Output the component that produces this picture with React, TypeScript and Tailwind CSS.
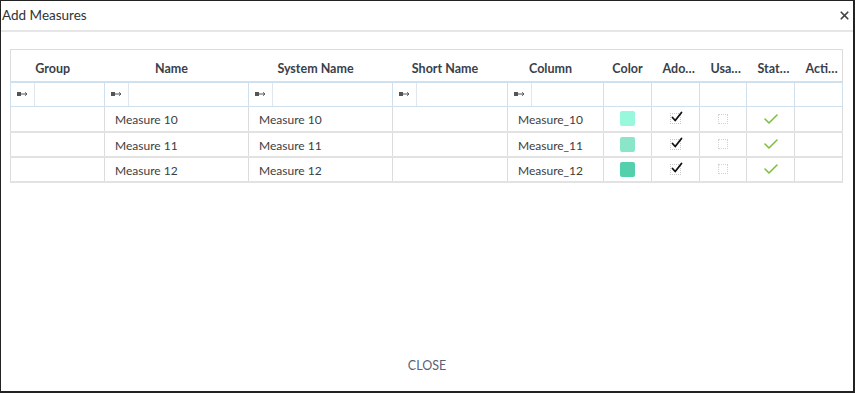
import { X } from "lucide-react";

const columns = [
  { key: "group", label: "Group", width: 94, filter: true, head: "pl-[4px] pr-[14px] text-center" },
  { key: "name", label: "Name", width: 144, filter: true, head: "pl-[4px] pr-[14px] text-center" },
  { key: "system", label: "System Name", width: 144, filter: true, head: "pl-[4px] pr-[14px] text-center" },
  { key: "short", label: "Short Name", width: 115, filter: true, head: "pl-[4px] pr-[14px] text-center" },
  { key: "column", label: "Column", width: 96, filter: true, head: "pl-[4px] pr-[14px] text-center" },
  { key: "color", label: "Color", width: 48, filter: false, head: "px-[2px] text-center" },
  { key: "adopted", label: "Adopted", width: 48, filter: false, head: "pl-[11px] pr-[2px] text-left" },
  { key: "usage", label: "Usage", width: 47, filter: false, head: "pl-[11px] pr-[4px] text-left" },
  { key: "status", label: "Status", width: 48, filter: false, head: "pl-[11px] pr-[4px] text-left" },
  { key: "actions", label: "Actions", width: 48, filter: false, head: "pl-[11px] pr-[4px] text-left" },
];

const rows = [
  { name: "Measure 10", column: "Measure_10", color: "#97f8dc" },
  { name: "Measure 11", column: "Measure_11", color: "#8be5c9" },
  { name: "Measure 12", column: "Measure_12", color: "#55d0ac" },
];

function FilterIcon() {
  return (
    <svg width="11" height="6" viewBox="0 0 11 6" className="shrink-0">
      <rect x="0" y="1" width="4" height="4" fill="#555" />
      <path d="M4 3h5.5" stroke="#555" strokeWidth="1" />
      <path d="M8 1.3 10 3 8 4.7" stroke="#555" strokeWidth="1" fill="none" />
    </svg>
  );
}

function FilterCell({ withInput }: { withInput: boolean }) {
  if (!withInput) {
    return <td className="h-[25px] border-x border-t-2 border-b border-[#cfe0ef] p-0" />;
  }
  return (
    <td className="h-[25px] border-x border-t-2 border-b border-[#cfe0ef] p-0">
      <div className="flex h-full items-center">
        <div className="flex h-full w-[24px] items-center justify-center border-r border-[#dfe6ee]">
          <FilterIcon />
        </div>
        <div className="flex-1" />
      </div>
    </td>
  );
}

function AdoptedCheck() {
  return (
    <div className="relative mx-auto h-[11px] w-[11px] border border-dotted border-[#c9c9c9]">
      <svg
        width="12"
        height="12"
        viewBox="0 0 12 12"
        className="absolute -top-[3px] left-[0px]"
      >
        <path
          d="M1.5 6.5 4.2 9.5 10.5 1.5"
          stroke="#111"
          strokeWidth="1.8"
          fill="none"
          strokeLinecap="round"
          strokeLinejoin="round"
        />
      </svg>
    </div>
  );
}

function StatusCheck() {
  return (
    <svg width="14" height="10" viewBox="0 0 14 10" className="mx-auto">
      <path
        d="M1 5 5 9 13 1"
        stroke="#7fbf3f"
        strokeWidth="1.6"
        fill="none"
        strokeLinecap="round"
        strokeLinejoin="round"
      />
    </svg>
  );
}

export default function App() {
  return (
    <div
      className="flex h-[393px] w-[855px] flex-col border-t border-l border-r-2 border-b-2 border-[#222] bg-white text-[#333]"
      style={{ fontFamily: "Lato, 'Open Sans', sans-serif" }}
    >
      <div className="flex h-[31px] shrink-0 items-center justify-between border-b-2 border-[#e6e6e6] pl-[1px] pr-[2px]">
        <span className="text-[13.5px] text-[#333]">Add Measures</span>
        <X size={13} strokeWidth={3.2} className="text-[#444]" />
      </div>

      <div className="px-[9px] pt-[17px]">
        <table className="w-[833px] table-fixed border-collapse border border-[#dcdcdc] text-[12px] text-[#3d3d3d]">
          <colgroup>
            {columns.map((c) => (
              <col key={c.key} style={{ width: c.width }} />
            ))}
          </colgroup>
          <thead>
            <tr className="h-[32px]">
              {columns.map((c) => (
                <th
                  key={c.key}
                  className={`overflow-hidden text-ellipsis whitespace-nowrap pt-[8px] text-[12.5px] font-bold text-[#3a3f4a] ${c.head}`}
                >
                  {c.label}
                </th>
              ))}
            </tr>
            <tr>
              {columns.map((c) => (
                <FilterCell key={c.key} withInput={c.filter} />
              ))}
            </tr>
          </thead>
          <tbody>
            {rows.map((r) => (
              <tr key={r.name} className="h-[25px] border-b-2 border-[#e2e2e2]">
                <td className="border-x border-[#dcdcdc]" />
                <td className="border-x border-[#dcdcdc] px-[10px] pt-[3px]">{r.name}</td>
                <td className="border-x border-[#dcdcdc] px-[10px] pt-[3px]">{r.name}</td>
                <td className="border-x border-[#dcdcdc]" />
                <td className="border-x border-[#dcdcdc] px-[10px] pt-[3px]">{r.column}</td>
                <td className="border-x border-[#dcdcdc]">
                  <div
                    className="mx-auto h-[15px] w-[15px] rounded-[2px]"
                    style={{ backgroundColor: r.color }}
                  />
                </td>
                <td className="border-x border-[#dcdcdc]">
                  <AdoptedCheck />
                </td>
                <td className="border-x border-[#dcdcdc]">
                  <div className="mx-auto h-[10px] w-[10px] border border-dotted border-[#d2d2d2]" />
                </td>
                <td className="border-x border-[#dcdcdc]">
                  <div className="flex justify-center">
                    <StatusCheck />
                  </div>
                </td>
                <td className="border-x border-[#dcdcdc]" />
              </tr>
            ))}
          </tbody>
        </table>
      </div>

      <div className="mt-auto flex justify-center pb-[15px]">
        <button type="button" className="text-[12.5px] text-[#5b6274]">
          CLOSE
        </button>
      </div>
    </div>
  );
}
